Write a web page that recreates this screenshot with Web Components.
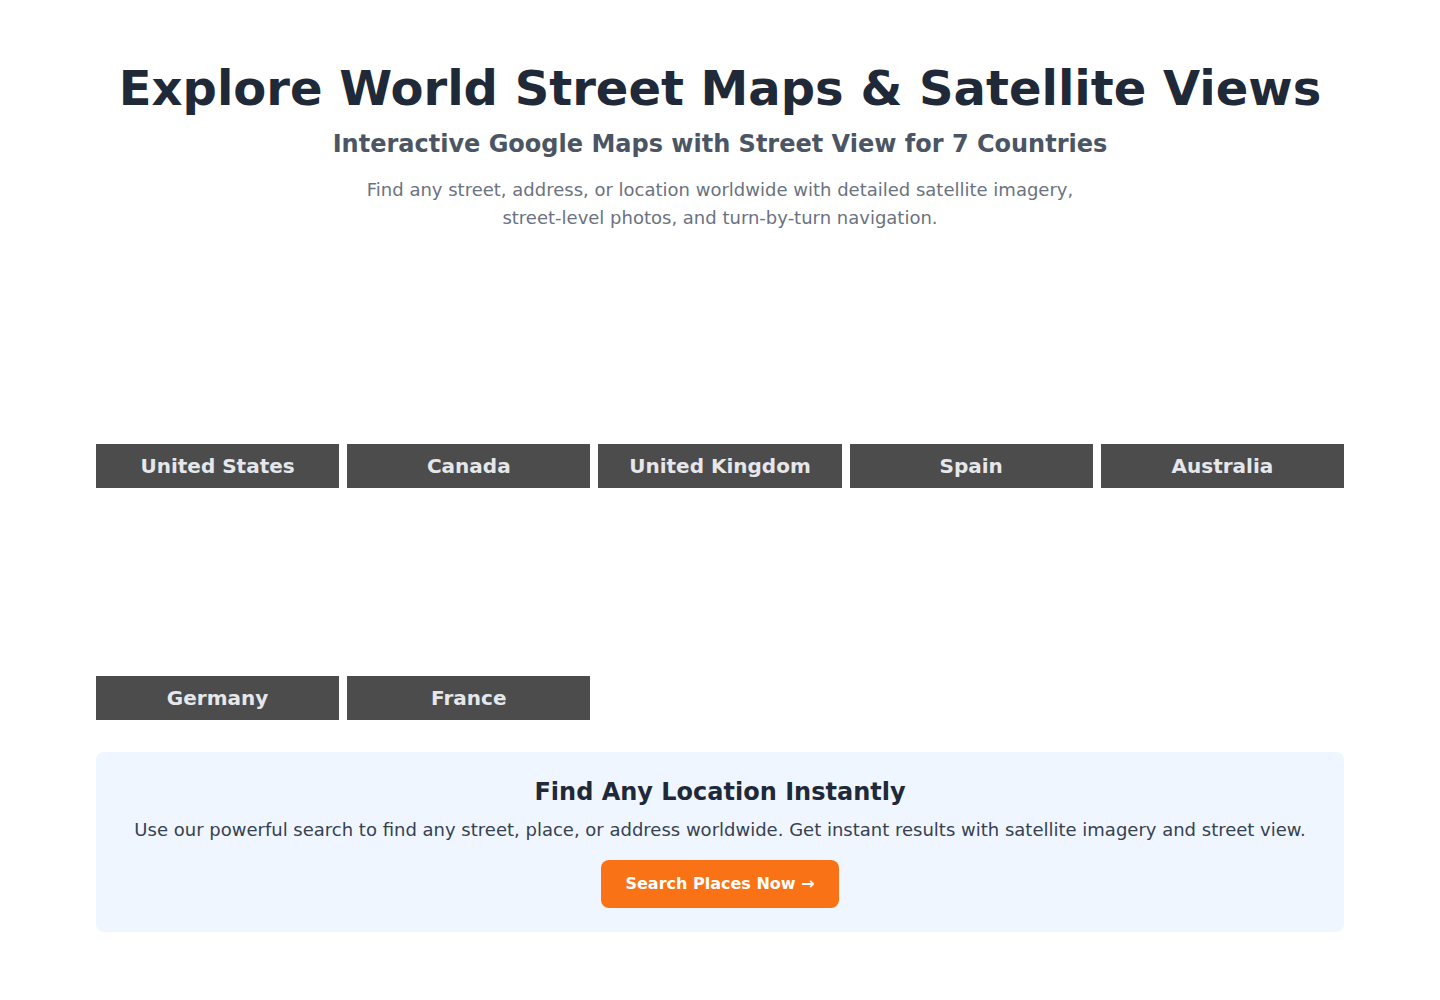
<!DOCTYPE html>
<html lang="en">
<head>
<meta charset="utf-8">
<meta name="viewport" content="width=device-width, initial-scale=1">
<title>World Street Maps</title>
<style>
body{margin:0;background:#fff;font-family:"DejaVu Sans",sans-serif;color:#1f2937}
</style>
</head>
<body>
<maps-page></maps-page>
<script>
class MapsHero extends HTMLElement{
  constructor(){
    super();
    this.attachShadow({mode:"open"}).innerHTML=`
<style>
:host{display:block;text-align:center}
h1,h2,p{margin:0}
h1{font-size:48px;line-height:48px;font-weight:700;color:#1f2937;margin-bottom:16px}
h2{font-size:24px;line-height:32px;font-weight:600;color:#4b5563;margin-bottom:16px}
p{font-size:18px;line-height:28px;color:#6b7280;max-width:768px;margin:0 auto}
</style>
<h1><slot name="title"></slot></h1>
<h2><slot name="subtitle"></slot></h2>
<p><slot></slot></p>`;
  }
}
customElements.define("maps-hero",MapsHero);

class CountryCard extends HTMLElement{
  constructor(){
    super();
    this.attachShadow({mode:"open"}).innerHTML=`
<style>
:host{display:block}
a{display:flex;flex-direction:column;justify-content:flex-end;height:224px;color:#e5e7eb;text-decoration:none}
span{display:block;padding:8px;background:#4c4c4c;text-align:center;font-size:20px;line-height:28px;font-weight:600}
</style>
<a href="#"><span><slot></slot></span></a>`;
  }
}
customElements.define("country-card",CountryCard);

class CountryGrid extends HTMLElement{
  constructor(){
    super();
    this.attachShadow({mode:"open"}).innerHTML=`
<style>
:host{display:grid;grid-template-columns:repeat(5,minmax(0,1fr));gap:8px}
@media (max-width:1000px){:host{grid-template-columns:repeat(2,minmax(0,1fr))}}
</style>
<slot></slot>`;
  }
}
customElements.define("country-grid",CountryGrid);

class SearchBanner extends HTMLElement{
  constructor(){
    super();
    this.attachShadow({mode:"open"}).innerHTML=`
<style>
:host{display:block;padding:24px;border-radius:8px;background:#eff6ff;text-align:center}
h2,p{margin:0}
h2{font-size:24px;line-height:32px;font-weight:700;color:#1f2937;margin-bottom:8px}
p{font-size:18px;line-height:28px;color:#374151;margin-bottom:16px}
a{display:block;width:fit-content;margin:0 auto;padding:12px 24px;border-radius:8px;background:#f97316;color:#fff;font-size:16px;line-height:24px;font-weight:600;text-decoration:none}
</style>
<h2><slot name="title"></slot></h2>
<p><slot></slot></p>
<a href="#"><slot name="action"></slot></a>`;
  }
}
customElements.define("search-banner",SearchBanner);

class MapsPage extends HTMLElement{
  constructor(){
    super();
    this.attachShadow({mode:"open"}).innerHTML=`
<style>
:host{display:block}
main{display:flex;flex-direction:column;gap:32px;max-width:1248px;margin:0 auto;padding:64px 16px}
</style>
<main>
<maps-hero>
<span slot="title">Explore World Street Maps &amp; Satellite Views</span>
<span slot="subtitle">Interactive Google Maps with Street View for 7 Countries</span>
Find any street, address, or location worldwide with detailed satellite imagery, street-level photos, and turn-by-turn navigation.
</maps-hero>
<country-grid>
<country-card>United States</country-card>
<country-card>Canada</country-card>
<country-card>United Kingdom</country-card>
<country-card>Spain</country-card>
<country-card>Australia</country-card>
<country-card>Germany</country-card>
<country-card>France</country-card>
</country-grid>
<search-banner>
<span slot="title">Find Any Location Instantly</span>
Use our powerful search to find any street, place, or address worldwide. Get instant results with satellite imagery and street view.
<span slot="action">Search Places Now →</span>
</search-banner>
</main>`;
  }
}
customElements.define("maps-page",MapsPage);
</script>
</body>
</html>
